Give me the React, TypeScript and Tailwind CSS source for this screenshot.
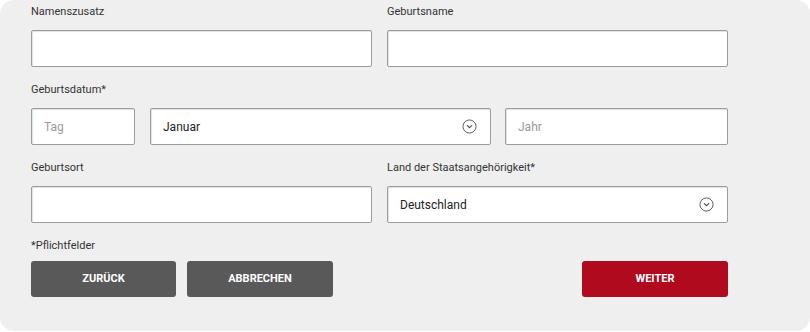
import React from "react";

const Chevron = () => (
  <svg width="15" height="15" viewBox="0 0 16 16" fill="none" className="shrink-0">
    <circle cx="8" cy="8" r="7" stroke="#555" strokeWidth="1" />
    <path d="M5.6 7 L8 9.3 L10.4 7" stroke="#444" strokeWidth="1.2" strokeLinecap="round" strokeLinejoin="round" />
  </svg>
);

const Label = ({ children }: { children: React.ReactNode }) => (
  <div className="text-[11px] leading-4 text-[#333] pt-[1px] mb-[10px]">{children}</div>
);

const inputCls =
  "h-[37px] w-full bg-white border border-[#9c9c9c] rounded-[2px] shadow-[inset_1px_1px_1px_rgba(0,0,0,0.12)] px-[12px] text-[12px] text-[#222] outline-none placeholder:text-[#9a9a9a]";

const Select = ({ value }: { value: string }) => (
  <div className="h-[37px] w-full bg-white border border-[#9c9c9c] rounded-[2px] shadow-[inset_1px_1px_1px_rgba(0,0,0,0.12)] pl-[12px] pr-[13px] flex items-center justify-between text-[12px] text-[#222]">
    <span>{value}</span>
    <Chevron />
  </div>
);

export default function App() {
  return (
    <div className="bg-white w-[810px] h-[332px]" style={{ fontFamily: "Roboto, 'Liberation Sans', sans-serif" }}>
      <div className="bg-[#efefef] h-[331px] rounded-[14px] pt-[3px] pl-[31px]">
        <div className="w-[697px] flex flex-col">
          <div className="grid grid-cols-2 gap-x-[15px]">
            <div>
              <Label>Namenszusatz</Label>
              <input className={inputCls} />
            </div>
            <div>
              <Label>Geburtsname</Label>
              <input className={inputCls} />
            </div>
          </div>

          <div className="mt-[14px]">
            <Label>Geburtsdatum*</Label>
            <div className="flex gap-[14px]">
              <div className="w-[104px] shrink-0">
                <input className={inputCls} placeholder="Tag" />
              </div>
              <div className="w-[341px] shrink-0 ml-[1px]">
                <Select value="Januar" />
              </div>
              <div className="flex-1">
                <input className={inputCls} placeholder="Jahr" />
              </div>
            </div>
          </div>

          <div className="grid grid-cols-2 gap-x-[15px] mt-[14px]">
            <div>
              <Label>Geburtsort</Label>
              <input className={inputCls} />
            </div>
            <div>
              <Label>Land der Staatsangehörigkeit*</Label>
              <Select value="Deutschland" />
            </div>
          </div>

          <div className="mt-[15px] text-[11px] leading-4 text-[#333] mb-[7px]">*Pflichtfelder</div>

          <div className="flex items-center">
            <button className="w-[145px] h-[36px] bg-[#595959] text-white text-[11px] font-bold uppercase rounded-[3px]">
              Zurück
            </button>
            <button className="w-[146px] h-[36px] bg-[#595959] text-white text-[11px] font-bold uppercase rounded-[3px] ml-[11px]">
              Abbrechen
            </button>
            <button className="w-[146px] h-[36px] bg-[#b00a1f] text-white text-[11px] font-bold uppercase rounded-[3px] ml-auto">
              Weiter
            </button>
          </div>
        </div>
      </div>
    </div>
  );
}
